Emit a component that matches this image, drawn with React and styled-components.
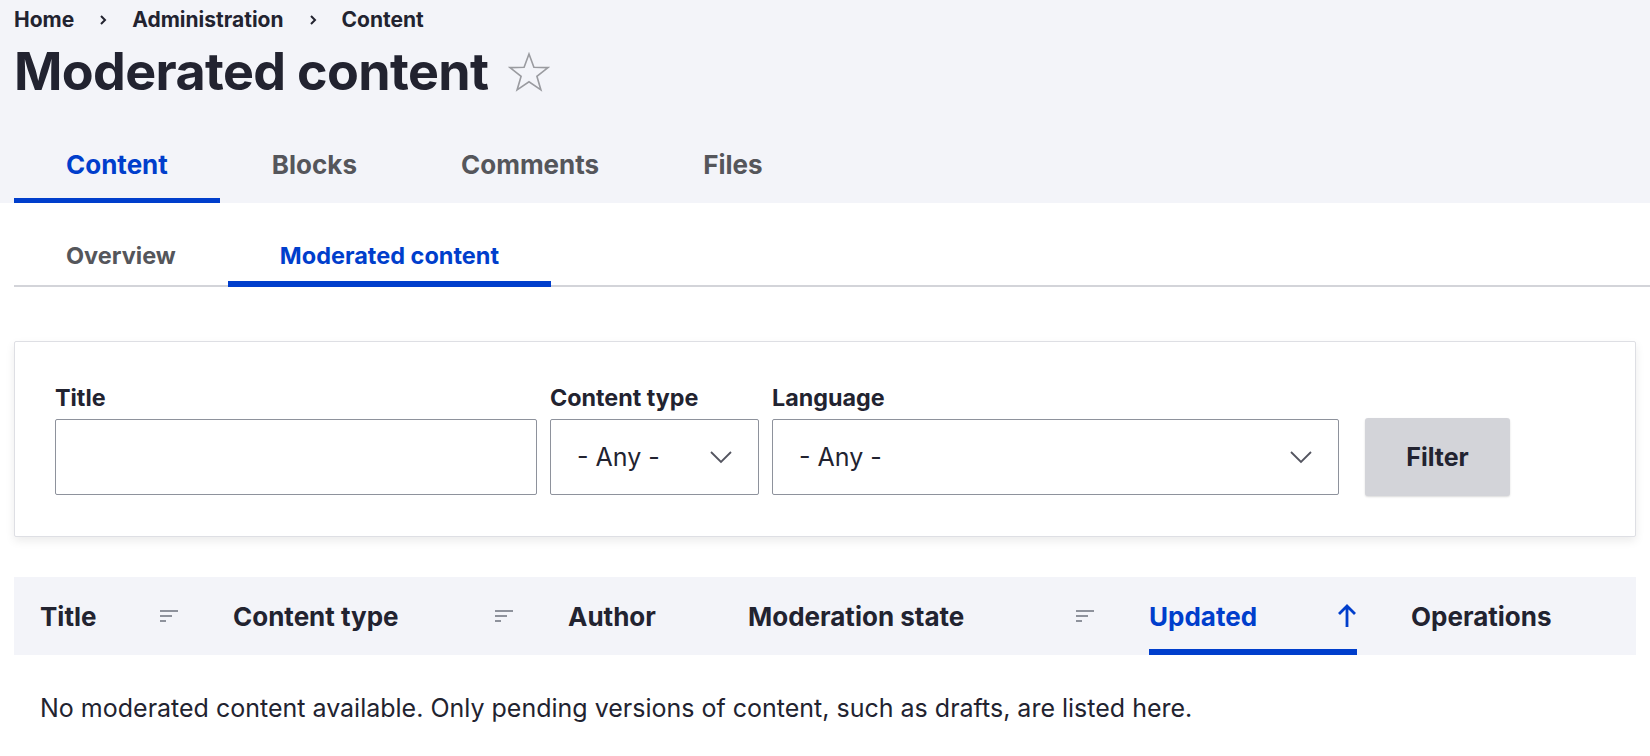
import React from "react";
import styled, { createGlobalStyle } from "styled-components";

const GlobalStyle = createGlobalStyle`
  html, body { margin: 0; padding: 0; background: #ffffff; }
  body {
    font-family: Inter, "Noto Sans", "Liberation Sans", sans-serif;
    color: #222330;
    -webkit-font-smoothing: antialiased;
  }
  * { box-sizing: border-box; }
`;

const Header = styled.header`
  background: #f3f4f9;
  padding: 0 14px;
`;

const Breadcrumb = styled.nav`
  display: flex;
  align-items: center;
  height: 40px;
`;

const Crumb = styled.a`
  font-size: 21px;
  font-weight: 700;
  color: #222330;
  text-decoration: none;
  line-height: 40px;
`;

const CrumbSep = styled.span`
  display: inline-flex;
  align-items: center;
  justify-content: center;
  width: 58px;
  color: #222330;
`;

const TitleRow = styled.div`
  display: flex;
  align-items: center;
  height: 64px;
  gap: 19px;
`;

const PageTitle = styled.h1`
  margin: 0;
  font-size: 52px;
  line-height: 64px;
  font-weight: 700;
  letter-spacing: -0.012em;
  color: #222330;
`;

const StarButton = styled.span`
  display: inline-flex;
  width: 42px;
  height: 40px;
  align-items: center;
  justify-content: center;
`;

const PrimaryTabs = styled.ul`
  display: flex;
  list-style: none;
  margin: 21px 0 0;
  padding: 0;
`;

const PrimaryTab = styled.li`
  height: 78px;
  padding: 0 52px;
  display: flex;
  align-items: center;
  font-size: 26px;
  font-weight: 700;
  color: ${(p) => (p.$active ? "#003ecc" : "#55565b")};
  box-shadow: ${(p) => (p.$active ? "inset 0 -5px 0 #003ecc" : "none")};
`;

const Main = styled.main`
  padding: 0 0 40px 14px;
`;

const SecondaryTabs = styled.ul`
  display: flex;
  list-style: none;
  margin: 20px 0 0;
  padding: 0;
  box-shadow: inset 0 -2px 0 #d3d4d9;
`;

const SecondaryTab = styled.li`
  height: 64px;
  padding: 0 52px;
  display: flex;
  align-items: center;
  font-size: 23.5px;
  font-weight: 700;
  color: ${(p) => (p.$active ? "#003ecc" : "#55565b")};
  box-shadow: ${(p) => (p.$active ? "inset 0 -6px 0 #003ecc" : "none")};
`;

const FilterCard = styled.form`
  margin: 54px 14px 0 0;
  background: #fff;
  border: 1px solid #dedfe4;
  border-radius: 2px;
  box-shadow: 0 4px 10px rgba(0, 0, 0, 0.08);
  padding: 42px 40px 41px;
  display: flex;
  align-items: flex-end;
  gap: 13px;
`;

const FormItem = styled.div`
  display: flex;
  flex-direction: column;
  width: ${(p) => p.$w}px;
`;

const Label = styled.label`
  font-size: 23.3px;
  font-weight: 700;
  line-height: 28px;
  margin-bottom: 7px;
  color: #222330;
  white-space: nowrap;
`;

const TextInput = styled.div`
  height: 76px;
  border: 1px solid #8e929c;
  border-radius: 2px;
  background: #fff;
`;

const Select = styled.div`
  height: 76px;
  border: 1px solid #8e929c;
  border-radius: 2px;
  background: #fff;
  display: flex;
  align-items: center;
  justify-content: space-between;
  padding: 0 26px 0 26px;
  font-size: 25px;
  color: #222330;
`;

const FilterButton = styled.button`
  margin-left: 13px;
  width: 145px;
  height: 78px;
  border: none;
  border-radius: 3px;
  background: #d3d4d9;
  box-shadow: 0 1px 2px rgba(0, 0, 0, 0.15);
  font-family: inherit;
  font-size: 25px;
  font-weight: 700;
  color: #222330;
  margin-bottom: -1px;
`;

const TableHead = styled.div`
  margin: 40px 14px 0 0;
  height: 78px;
  background: #f3f4f9;
  display: grid;
  grid-template-columns: 193px 335px 180px 401px 262px 1fr;
`;

const HeadCell = styled.div`
  height: 78px;
  padding: 0 28px 0 26px;
  display: flex;
`;

const HeadInner = styled.div`
  flex: 1;
  display: flex;
  align-items: center;
  justify-content: space-between;
  font-size: 26px;
  font-weight: 700;
  white-space: nowrap;
  color: ${(p) => (p.$active ? "#003ecc" : "#222330")};
  box-shadow: ${(p) => (p.$active ? "inset 0 -6px 0 #003ecc" : "none")};
`;

const EmptyText = styled.p`
  margin: 38px 0 0 26px;
  font-size: 25px;
  line-height: 30px;
  color: #222330;
`;

const ChevronRight = () => (
  <svg width="10" height="12" viewBox="0 0 10 12">
    <path d="M3 2 L7 6 L3 10" fill="none" stroke="#222330" strokeWidth="2" />
  </svg>
);

const Star = () => (
  <svg width="42" height="40" viewBox="0 0 42 40">
    <polygon
      points="21,2 25.9,15.3 40,15.6 28.9,24.3 32.9,37.9 21,29.8 9.1,37.9 13.1,24.3 2,15.6 16.1,15.3"
      fill="none"
      stroke="#9a9ba0"
      strokeWidth="1.6"
      strokeLinejoin="miter"
    />
  </svg>
);

const ChevronDown = () => (
  <svg width="22" height="13" viewBox="0 0 22 13">
    <path d="M1 1 L11 11 L21 1" fill="none" stroke="#545560" strokeWidth="1.8" />
  </svg>
);

const SortIcon = () => (
  <svg width="19" height="14" viewBox="0 0 19 14">
    <rect x="0" y="1" width="18" height="2" fill="#8e929c" />
    <rect x="0" y="6" width="12" height="2" fill="#8e929c" />
    <rect x="0" y="11" width="6" height="2" fill="#8e929c" />
  </svg>
);

const ArrowUp = () => (
  <svg width="20" height="26" viewBox="0 0 20 26">
    <path d="M10 24 V3 M2 11 L10 3 L18 11" fill="none" stroke="#003ecc" strokeWidth="2.8" />
  </svg>
);

const columns = [
  { label: "Title", sort: true },
  { label: "Content type", sort: true },
  { label: "Author" },
  { label: "Moderation state", sort: true },
  { label: "Updated", active: true },
  { label: "Operations" },
];

export default function App() {
  return (
    <>
      <GlobalStyle />
      <Header>
        <Breadcrumb>
          <Crumb href="#">Home</Crumb>
          <CrumbSep><ChevronRight /></CrumbSep>
          <Crumb href="#">Administration</Crumb>
          <CrumbSep><ChevronRight /></CrumbSep>
          <Crumb href="#">Content</Crumb>
        </Breadcrumb>
        <TitleRow>
          <PageTitle>Moderated content</PageTitle>
          <StarButton><Star /></StarButton>
        </TitleRow>
        <PrimaryTabs>
          <PrimaryTab $active>Content</PrimaryTab>
          <PrimaryTab>Blocks</PrimaryTab>
          <PrimaryTab>Comments</PrimaryTab>
          <PrimaryTab>Files</PrimaryTab>
        </PrimaryTabs>
      </Header>
      <Main>
        <SecondaryTabs>
          <SecondaryTab>Overview</SecondaryTab>
          <SecondaryTab $active>Moderated content</SecondaryTab>
        </SecondaryTabs>
        <FilterCard onSubmit={(e) => e.preventDefault()}>
          <FormItem $w={482}>
            <Label>Title</Label>
            <TextInput />
          </FormItem>
          <FormItem $w={209}>
            <Label>Content type</Label>
            <Select>
              <span>- Any -</span>
              <ChevronDown />
            </Select>
          </FormItem>
          <FormItem $w={567}>
            <Label>Language</Label>
            <Select>
              <span>- Any -</span>
              <ChevronDown />
            </Select>
          </FormItem>
          <FilterButton type="submit">Filter</FilterButton>
        </FilterCard>
        <TableHead>
          {columns.map((c) => (
            <HeadCell key={c.label}>
              <HeadInner $active={c.active}>
                <span>{c.label}</span>
                {c.sort && <SortIcon />}
                {c.active && <ArrowUp />}
              </HeadInner>
            </HeadCell>
          ))}
        </TableHead>
        <EmptyText>
          No moderated content available. Only pending versions of content, such as drafts, are listed here.
        </EmptyText>
      </Main>
    </>
  );
}
